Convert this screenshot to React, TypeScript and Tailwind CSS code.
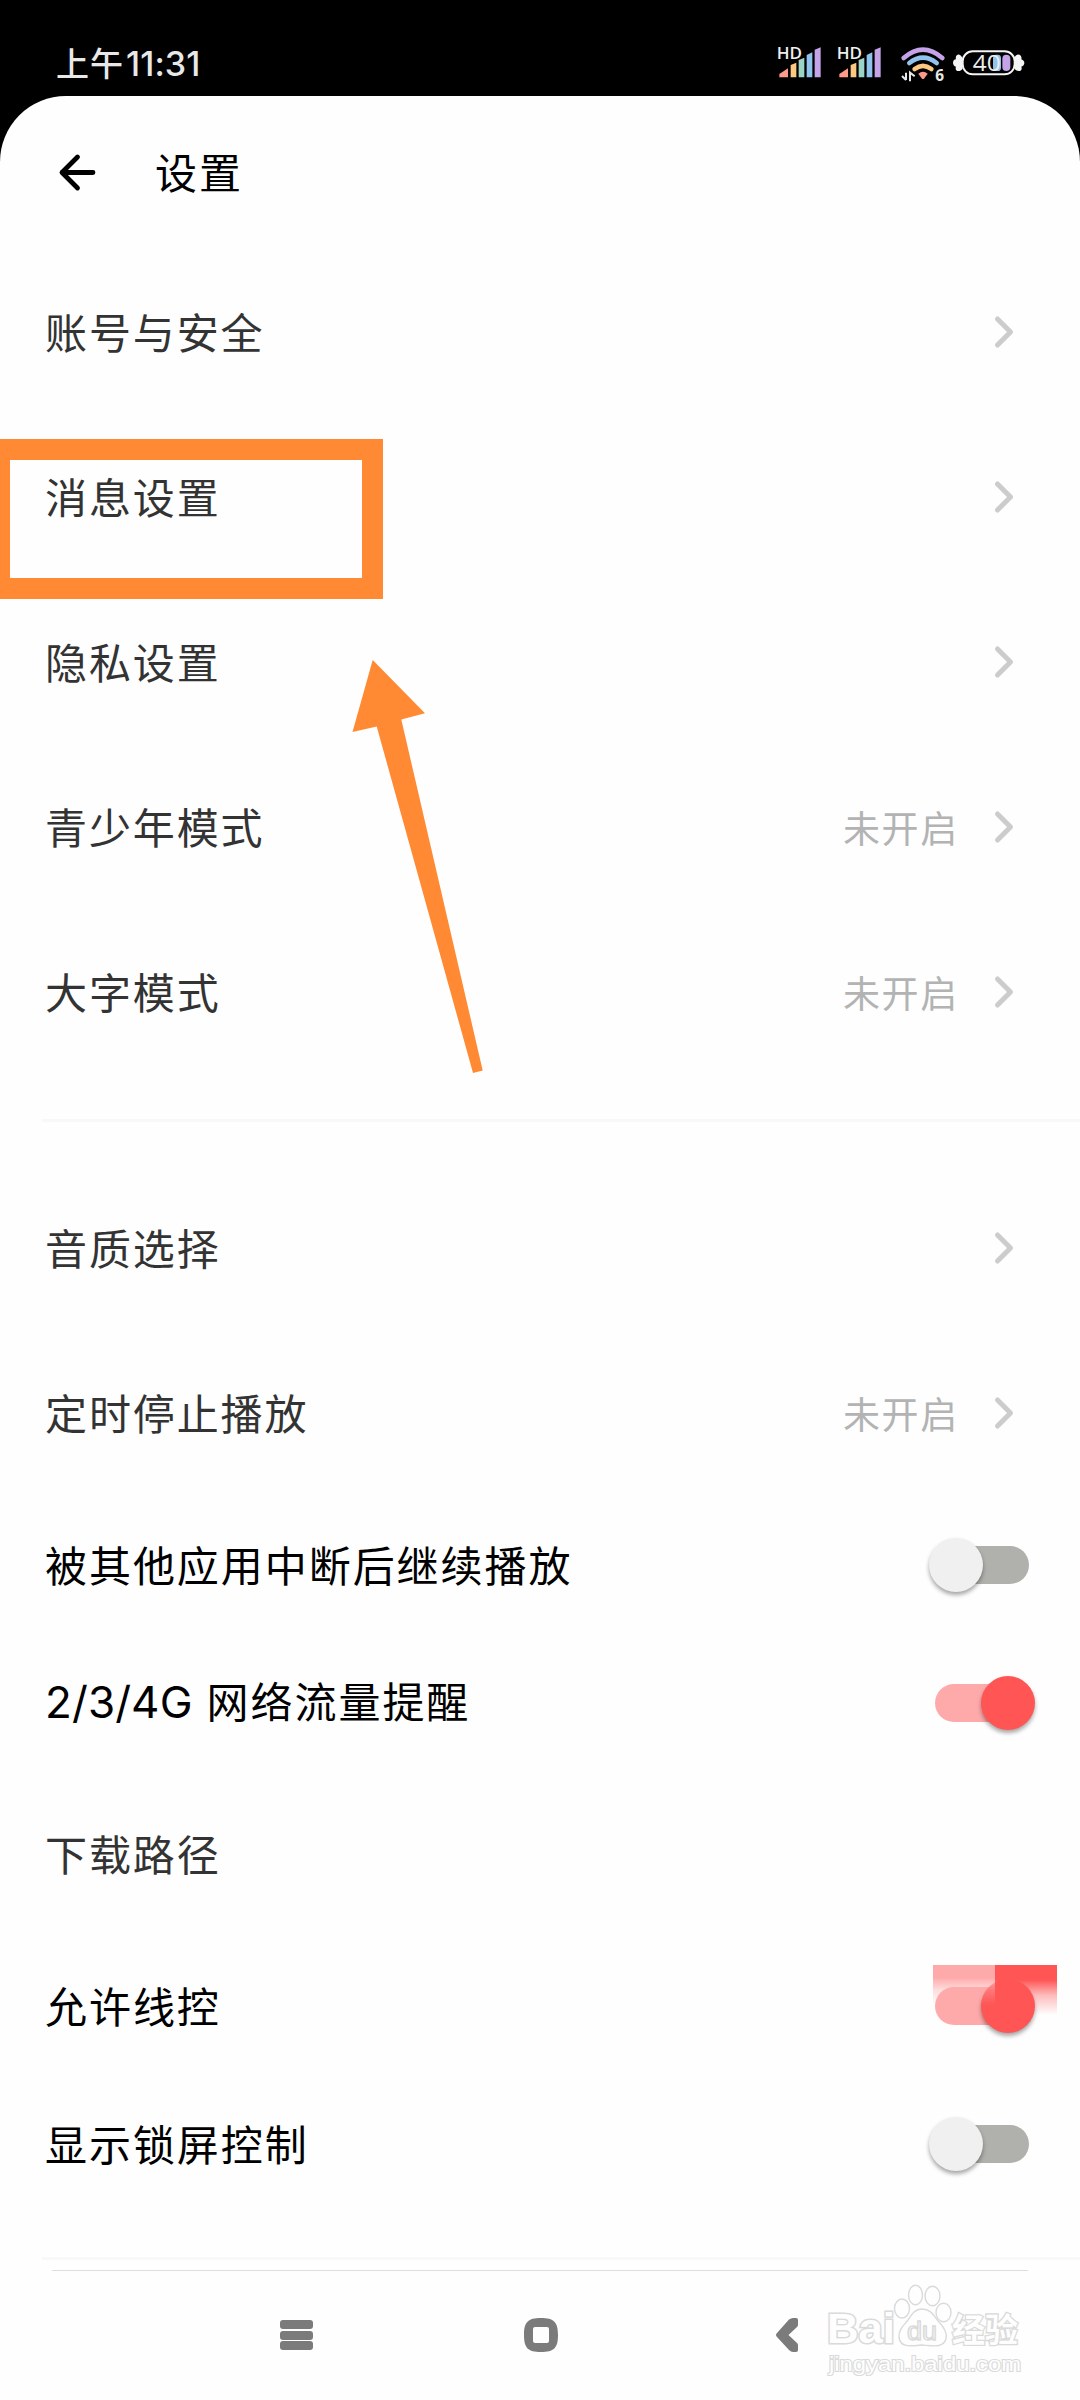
import { useState } from "react";

type Item = {
  label: string;
  latin?: string;
  kind: "link" | "toggle" | "plain";
  value?: string;
  on?: boolean;
  glow?: boolean;
};

const general: Item[] = [
  { label: "账号与安全", kind: "link" },
  { label: "消息设置", kind: "link" },
  { label: "隐私设置", kind: "link" },
  { label: "青少年模式", kind: "link", value: "未开启" },
  { label: "大字模式", kind: "link", value: "未开启" },
];

const playback: Item[] = [
  { label: "音质选择", kind: "link" },
  { label: "定时停止播放", kind: "link", value: "未开启" },
  { label: "被其他应用中断后继续播放", kind: "toggle", on: false },
  { label: "网络流量提醒", latin: "2/3/4G", kind: "toggle", on: true },
  { label: "下载路径", kind: "plain" },
  { label: "允许线控", kind: "toggle", on: true, glow: true },
  { label: "显示锁屏控制", kind: "toggle", on: false },
];

export default function App() {
  return (
    <div className="relative flex h-[2400px] w-[1080px] flex-col overflow-hidden bg-black font-['Noto_Sans_CJK_SC',sans-serif]">
      <StatusBar />
      <div className="flex flex-1 flex-col rounded-t-[66px] bg-[#fefefe]">
        <header className="flex h-[155px] items-center pl-[58px]">
          <BackArrow />
          <h1 className="ml-[58px] pb-[5px] text-[42px] leading-none tracking-[1.9px] text-black">设置</h1>
        </header>
        <section className="pb-[43px]">
          {general.map((item) => (
            <Row key={item.label} item={item} />
          ))}
        </section>
        <div className="ml-[42px] h-[3px] shrink-0 bg-[#f8f8f8]" />
        <section className="pt-[45px] pb-[43px]">
          {playback.map((item) => (
            <Row key={item.label} item={item} />
          ))}
        </section>
        <div className="ml-[42px] h-[3px] shrink-0 bg-[#f8f8f8]" />
        <NavBar />
      </div>
      <Annotation />
      <Watermark />
    </div>
  );
}

function Row({ item }: { item: Item }) {
  if (item.kind === "toggle") {
    return (
      <div className="flex h-[138px] items-center justify-between pl-[45px]">
        <span className="flex items-baseline pb-[5px] text-[42px] leading-none tracking-[1.95px] whitespace-pre text-black">
          {item.latin && <span className="mr-[14px] font-['Inter'] text-[44px] leading-none tracking-[0.1px]">{item.latin}</span>}
          {item.label}
        </span>
        <Toggle initial={!!item.on} glow={item.glow} />
      </div>
    );
  }
  return (
    <div className="flex h-[165px] items-center justify-between pr-[65px] pl-[45px]">
      <span className="pb-[5px] text-[42px] leading-none tracking-[1.9px] text-[#333]">{item.label}</span>
      {item.kind === "link" && (
        <div className="flex items-center">
          {item.value && (
            <span className="mr-[34px] pb-[3px] text-[37px] leading-none tracking-[1.7px] text-[#b3b3b3]">{item.value}</span>
          )}
          <svg width="22" height="34" viewBox="0 0 22 34" fill="none" className="-mt-1">
            <path d="M4.5 4 17.5 17 4.5 30" stroke="#ccc" strokeWidth="5" strokeLinecap="round" strokeLinejoin="round" />
          </svg>
        </div>
      )}
    </div>
  );
}

function Toggle({ initial, glow }: { initial: boolean; glow?: boolean }) {
  const [on, setOn] = useState(initial);
  return (
    <button
      type="button"
      role="switch"
      aria-checked={on}
      onClick={() => setOn(!on)}
      className="relative mr-[23px] -mt-[3px] flex h-[82px] w-[129px] items-center"
    >
      <span className={`ml-[7px] h-[38px] w-[94px] rounded-full ${on ? "bg-[#ffaaaa]" : "bg-[#b0b0ac]"}`} />
      <span
        className={`absolute top-[14px] size-[54px] rounded-full shadow-[0_3px_4px_rgba(0,0,0,0.35)] ${
          on ? "left-[53px] bg-[#ff5555]" : "left-[1px] bg-[#f0f0f0]"
        }`}
      />
      {glow && (
        <span className="absolute top-0 left-[5px] flex h-[50px] w-[124px]">
          <span className="w-[62px] bg-linear-to-b from-[#ffaaaa] from-25% via-[#ffaaaa66] via-50% to-transparent to-80%" />
          <span className="w-[62px] bg-linear-to-b from-[#ff5555] from-30% via-[#ff555566] via-60% to-transparent to-100%" />
        </span>
      )}
    </button>
  );
}

function BackArrow() {
  return (
    <svg width="39" height="39" viewBox="0 0 39 39" fill="none" className="-mt-0.5">
      <path
        d="M35 19.5H4M19.5 4 4 19.5 19.5 35"
        stroke="#000"
        strokeWidth="4.8"
        strokeLinecap="round"
        strokeLinejoin="round"
      />
    </svg>
  );
}

function SignalBars() {
  return (
    <>
      <path d="M58 132 84 115V142H58Z" fill="#ff9a8b" />
      <path d="M92 105 109 98V142H92Z" fill="#fdc982" />
      <path d="M116 90 133 83V142H116Z" fill="#9bd3c6" />
      <path d="M140 75 157 67V142H140Z" fill="#8fc3ee" />
      <path d="M164 59 182 52V142H164Z" fill="#c5a3e8" />
      <text
        x="50"
        y="87"
        fontSize="49"
        fill="#eee"
        fontFamily="Open Sans"
        fontWeight="600"
        textLength="76"
        lengthAdjust="spacingAndGlyphs"
      >
        HD
      </text>
    </>
  );
}

function StatusBar() {
  return (
    <div className="flex h-[96px] shrink-0 items-start justify-between pr-10 pl-[56px]">
      <div className="mt-[44px] text-[33px] leading-[36px] font-medium tracking-[1px] text-[#e8e8e8]">
        上午<span className="ml-[2px] font-['Inter'] text-[34px] tracking-[0.1px]">11:31</span>
      </div>
      <svg className="mt-[30px]" width="280" height="66" viewBox="0 0 840 198" fill="none">
        <SignalBars />
        <g transform="translate(180 0)">
          <SignalBars />
        </g>
        {/* wifi */}
        <g fill="none" strokeWidth="14" strokeLinecap="round">
          <path d="M431 84Q489 34 547 84" stroke="#c5a3e8" />
          <path d="M448 99Q489 67 530 99" stroke="#8fc3ee" />
          <path d="M464 117Q489 98 514 117" stroke="#fdc982" />
        </g>
        <path d="M475 131Q489 119 503 131L492 146Q489 148 486 146Z" fill="#ff9a8b" />
        <path d="M438 128V150M426 138 438 150M450 154V128L464 139" stroke="#e8e8e8" strokeWidth="6" />
        <text x="526" y="152" fontSize="46" fill="#e8e8e8" fontFamily="Open Sans" fontWeight="700">
          6
        </text>
        {/* candy shaped battery */}
        <path
          d="M606 82C598 66 584 76 588 88 576 88 576 108 588 110 582 124 600 128 608 116ZM764 82C772 66 788 76 784 88 796 92 796 106 784 110 790 124 772 128 764 116Z"
          fill="#f4f4f4"
        />
        <rect x="608" y="64" width="156" height="69" rx="30" fill="#000" stroke="#f4f4f4" strokeWidth="6" />
        <rect x="699" y="74" width="24" height="49" rx="10" fill="#8fc3ee" />
        <rect x="727" y="74" width="24" height="49" rx="12" fill="#c5a3e8" />
        <text x="638" y="122" fontSize="66" fill="#eee" fontFamily="Open Sans" fontWeight="500" textLength="84" lengthAdjust="spacingAndGlyphs">
          40
        </text>
      </svg>
    </div>
  );
}

function NavBar() {
  return (
    <nav className="mt-[10px] flex flex-1 flex-col">
      <div className="mr-[52px] ml-[52px] h-px shrink-0 bg-[#dedede]" />
      <div className="mt-[47px] flex h-[34px] items-center">
        <div className="ml-[280px] flex w-[33px] flex-col gap-[1.5px]">
          <span className="h-[9px] rounded-[3px] bg-[#7b7b7b]" />
          <span className="h-[9px] rounded-[3px] bg-[#7b7b7b]" />
          <span className="h-[9px] rounded-[3px] bg-[#7b7b7b]" />
        </div>
        <svg className="ml-[211px]" width="34" height="34" viewBox="0 0 34 34">
          <path
            fillRule="evenodd"
            d="M17 0C30 0 34 4 34 17S30 34 17 34 0 30 0 17 4 0 17 0ZM11 9Q9 9 9 11V23Q9 25 11 25H23Q25 25 25 23V11Q25 9 23 9Z"
            fill="#7b7b7b"
          />
        </svg>
        <svg className="ml-[218px]" width="23" height="34" viewBox="0 0 23 34">
          <path
            d="M13 1.5Q15 0 17 0H20Q22 0 22 2V7Q22 8 21 9L12.5 17 21 25Q22 26 22 27V32Q22 34 20 34H17Q15 34 13 32L1 19Q-1 17 1 15Z"
            fill="#7b7b7b"
          />
        </svg>
      </div>
    </nav>
  );
}

// hand-drawn callout over the message settings row
function Annotation() {
  return (
    <>
      <div className="pointer-events-none absolute top-[439px] left-[-11px] h-[160px] w-[394px] border-[21px] border-[#ff8a33]" />
      <svg className="pointer-events-none absolute top-[660px] left-[352px]" width="132" height="414" viewBox="352 660 132 414">
        <path d="M372.7 660 425 713.3 401.3 719.5 482.7 1070.5 473 1073 376.7 726.5 352.5 732Z" fill="#ff8a33" />
      </svg>
    </>
  );
}

function Watermark() {
  return (
    <svg
      className="pointer-events-none absolute top-[2280px] left-[820px]"
      width="210"
      height="100"
      viewBox="820 2280 210 100"
      fill="#fefefe"
      stroke="#dadada"
      strokeWidth="1.4"
    >
      <text x="827" y="2343" fontSize="42" fontFamily="Liberation Sans" fontWeight="700" textLength="68" lengthAdjust="spacingAndGlyphs" strokeWidth="3" paintOrder="stroke">
        Bai
      </text>
      <ellipse cx="902" cy="2308.5" rx="7.5" ry="9.5" />
      <ellipse cx="915.5" cy="2295" rx="7" ry="9.7" />
      <ellipse cx="932.5" cy="2296" rx="7.5" ry="9.7" />
      <ellipse cx="943.5" cy="2312.5" rx="7.5" ry="9.3" />
      <path d="M922 2309C931 2309 934 2316 938 2321 943 2326 948 2332 946 2339 943 2348 934 2346 922 2345 911 2346 901 2348 899 2338 898 2330 904 2325 908 2320 912 2314 915 2309 922 2309Z" />
      <text x="907" y="2340" fontSize="25" fontFamily="Liberation Sans" textLength="30" lengthAdjust="spacingAndGlyphs">
        du
      </text>
      <text x="952" y="2341.5" fontSize="33" fontFamily="Noto Sans CJK SC" fontWeight="700" textLength="66" strokeWidth="2.6" paintOrder="stroke">
        经验
      </text>
      <text x="829" y="2371" fontSize="20" fontFamily="Liberation Sans" textLength="192" lengthAdjust="spacingAndGlyphs" strokeWidth="2" paintOrder="stroke">
        jingyan.baidu.com
      </text>
    </svg>
  );
}
